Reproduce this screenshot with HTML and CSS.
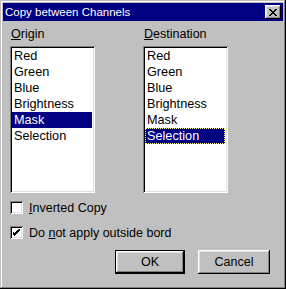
FILE: index.html
```html
<!DOCTYPE html>
<html>
<head>
    <meta charset="UTF-8">
    <title>Copy between Channels</title>
    <link rel="stylesheet" href="styles.css">
</head>
<body>
<div class="window">
    <div class="titlebar">
        <span class="title">Copy between Channels</span>
        <button class="close-btn">
            <svg width="8" height="7" viewBox="0 0 8 7">
                <path d="M0 0h2v1h1v1h2v-1h1v-1h2v1h-1v1h-1v1h-1v1h1v1h1v1h1v1h-2v-1h-1v-1h-2v1h-1v1h-2v-1h1v-1h1v-1h1v-1h-1v-1h-1v-1h-1z" fill="#000"/>
            </svg>
        </button>
    </div>

    <div class="content">
        <div class="lists">
            <div class="list-group">
                <div class="group-label"><u>O</u>rigin</div>
                <div class="listbox">
                    <div class="list-item">Red</div>
                    <div class="list-item">Green</div>
                    <div class="list-item">Blue</div>
                    <div class="list-item">Brightness</div>
                    <div class="list-item selected">Mask</div>
                    <div class="list-item">Selection</div>
                </div>
            </div>
            <div class="list-group">
                <div class="group-label"><u>D</u>estination</div>
                <div class="listbox">
                    <div class="list-item">Red</div>
                    <div class="list-item">Green</div>
                    <div class="list-item">Blue</div>
                    <div class="list-item">Brightness</div>
                    <div class="list-item">Mask</div>
                    <div class="list-item selected focused">Selection</div>
                </div>
            </div>
        </div>

        <div class="options">
            <div class="check-row">
                <span class="checkbox"></span>
                <span class="check-label"><u>I</u>nverted Copy</span>
            </div>
            <div class="check-row">
                <span class="checkbox">
                    <svg width="7" height="7" viewBox="0 0 7 7">
                        <path d="M6 0h1v2h-1v1h-1v1h-1v1h-1v1h-1v1h-1v-1h-1v-1h-1v-3h1v1h1v1h1v-1h1v-1h1v-1h1z" fill="#000"/>
                    </svg>
                </span>
                <span class="check-label clipped">Do <u>n</u>ot apply outside border</span>
            </div>
        </div>

        <div class="buttons">
            <button class="btn btn-default"><span>OK</span></button>
            <button class="btn">Cancel</button>
        </div>
    </div>
</div>
</body>
</html>
```

FILE: styles.css
```css
body {
    margin: 0;
    background: #c0c0c0;
    font-family: "Liberation Sans", Arial, sans-serif;
    font-size: 12px;
    color: #000;
}

.window {
    width: 286px;
    height: 289px;
    box-sizing: border-box;
    padding: 3px;
    background: #c0c0c0;
    box-shadow: inset -1px -1px #000, inset 1px 1px #c0c0c0,
                inset -2px -2px #808080, inset 2px 2px #fff;
}

.titlebar {
    height: 18px;
    background: #000080;
    display: flex;
    align-items: center;
    justify-content: space-between;
    padding: 0 2px 0 2px;
}

.title {
    color: #fff;
    font-size: 11.5px;
}

.close-btn {
    width: 16px;
    height: 14px;
    padding: 0;
    border: none;
    background: #c0c0c0;
    display: flex;
    align-items: center;
    justify-content: center;
    box-shadow: inset -1px -1px #000, inset 1px 1px #fff,
                inset -2px -2px #808080, inset 2px 2px #dfdfdf;
}

.content {
    padding: 5px 0 0 7px;
}

.lists {
    display: flex;
    gap: 48px;
}

.list-group {
    width: 85px;
}

.group-label {
    height: 16px;
    line-height: 16px;
    padding-left: 1px;
    font-size: 12.5px;
    margin-bottom: 4px;
}

.listbox {
    height: 147px;
    box-sizing: border-box;
    padding: 2px;
    background: #fff;
    box-shadow: inset 1px 1px #808080, inset -1px -1px #fff,
                inset 2px 2px #000, inset -2px -2px #dfdfdf;
}

.list-item {
    height: 16px;
    line-height: 16px;
    padding-left: 2px;
    font-size: 12.7px;
    white-space: nowrap;
}

.list-item.selected {
    background: #000080;
    color: #fff;
    margin-right: 1px;
}

.list-item.focused {
    outline: 1px dotted #ffff80;
    outline-offset: -1px;
}

.options {
    margin-top: 8px;
    display: flex;
    flex-direction: column;
    gap: 12px;
}

.check-row {
    display: flex;
    align-items: center;
    height: 13px;
}

.checkbox {
    width: 13px;
    height: 13px;
    box-sizing: border-box;
    background: #fff;
    display: flex;
    align-items: center;
    justify-content: center;
    box-shadow: inset 1px 1px #808080, inset -1px -1px #fff,
                inset 2px 2px #000, inset -2px -2px #dfdfdf;
}

.check-label {
    margin-left: 6px;
    font-size: 12.5px;
    line-height: 16px;
    white-space: nowrap;
}

.check-label.clipped {
    width: 142px;
    overflow: hidden;
}

.buttons {
    display: flex;
    justify-content: flex-end;
    gap: 13px;
    margin-top: 11px;
    padding-right: 13px;
}

.btn {
    height: 24px;
    width: 72px;
    padding: 0;
    border: none;
    background: #c0c0c0;
    font-family: "Liberation Sans", Arial, sans-serif;
    font-size: 12.5px;
    color: #000;
    box-shadow: inset -1px -1px #000, inset 1px 1px #fff,
                inset -2px -2px #808080, inset 2px 2px #dfdfdf;
}

.btn-default {
    width: 70px;
    border: 1px solid #000;
}
```
